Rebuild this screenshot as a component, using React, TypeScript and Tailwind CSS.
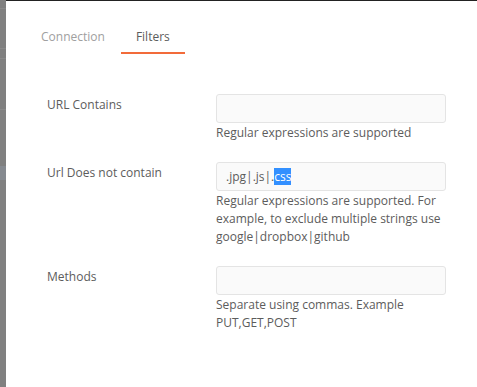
import React from 'react';

// Proxy filters dialog: tabs + three filter rows with help text.

const rows = [
  {
    label: 'URL Contains',
    value: null,
    help: ['Regular expressions are supported'],
  },
  {
    label: 'Url Does not contain',
    value: 'css',
    help: ['Regular expressions are supported. For example, to exclude multiple strings use google|dropbox|github'],
  },
  {
    label: 'Methods',
    value: null,
    help: ['Separate using commas. Example PUT,GET,POST'],
  },
];

function FieldBox({ filled }: { filled: boolean }) {
  return (
    <div className="h-[29px] w-[230px] rounded-[3px] border border-[#e4e4e4] bg-[#fafafa] px-[9px] flex items-center text-[#5c5c5c] text-[12px]">
      {filled && (
        <span>
          .jpg|.js|.<span className="bg-[#3390ff] text-white">css</span>
        </span>
      )}
    </div>
  );
}

export default function App() {
  return (
    <div className="w-[477px] h-[387px] flex overflow-hidden" style={{ fontFamily: '"Open Sans", "Noto Sans", sans-serif' }}>
      {/* dimmed page behind the dialog */}
      <div className="w-[6px] h-full bg-[#808080] flex flex-col shrink-0">
        <div className="h-[9px] border-b border-[#8a8a8a]" />
        <div className="h-[40px] border-b border-[#8a8a8a]" />
        <div className="h-[10px] border-b border-[#8a8a8a]" />
        <div className="h-[51px] border-b border-[#8a8a8a]" />
        <div className="h-[56px]" />
        <div className="h-[14px] bg-[#868a90]" />
      </div>

      <div className="flex-1 bg-white border-t border-[#222] text-[12px] leading-[18px] text-[#5c5c5c]">
        <div className="flex pl-[19px] pt-[27px]">
          <div className="px-4 pb-[6px] text-[#a0a0a0]">Connection</div>
          <div className="px-[15px] pb-[6px] border-b-2 border-[#f26b3a] text-[#5c5c5c]">Filters</div>
        </div>

        <div className="mt-[40px] pl-[41px]">
          {rows.map((r) => (
            <div key={r.label} className="flex mb-5">
              <div className="w-[169px] shrink-0 pt-[2px]">{r.label}</div>
              <div className="w-[230px]">
                <FieldBox filled={r.value !== null} />
                {r.help.map((h) => (
                  <p key={h} className="mt-[1px]">{h}</p>
                ))}
              </div>
            </div>
          ))}
        </div>
      </div>
    </div>
  );
}
